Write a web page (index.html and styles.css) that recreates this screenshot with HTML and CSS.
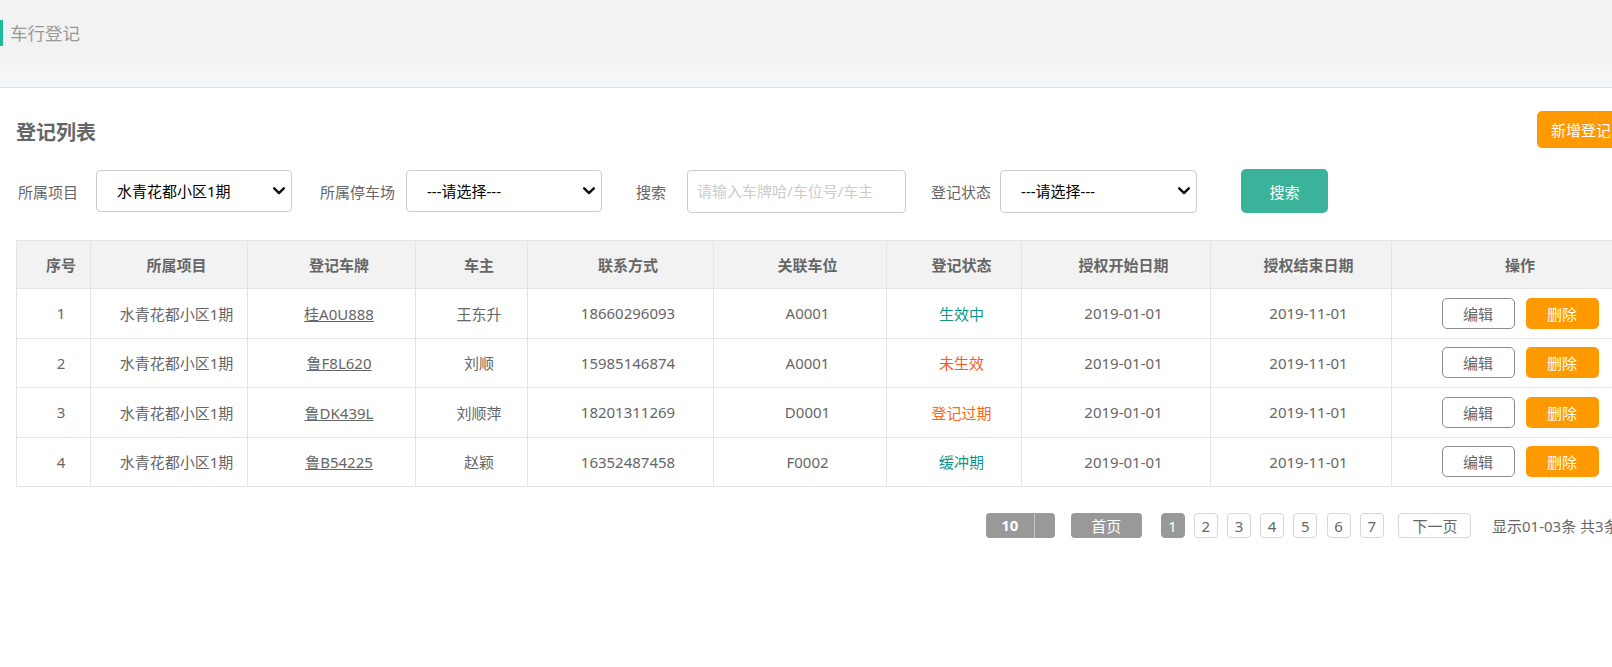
FILE: index.html
```html
<!DOCTYPE html>
<html lang="zh-CN">
<head>
<meta charset="utf-8">
<title>车行登记</title>
<link rel="stylesheet" href="styles.css">
</head>
<body>
<div class="topbar"><span class="crumb">车行登记</span></div>
<div class="strip"></div>
<div class="content">
  <div class="title-row">
    <h2 class="title">登记列表</h2>
    <button class="btn-add">新增登记</button>
  </div>
  <div class="filters">
    <label class="lbl lbl1">所属项目</label>
    <span class="sel-wrap sw1">
      <select class="sel"><option>水青花都小区1期</option></select>
      <svg class="chev" width="12" height="8" viewBox="0 0 12 8"><path d="M1.2 1.3 L6 6.1 L10.8 1.3" fill="none" stroke="#111" stroke-width="2.4" stroke-linecap="round" stroke-linejoin="round"/></svg>
    </span>
    <label class="lbl lbl2">所属停车场</label>
    <span class="sel-wrap sw2">
      <select class="sel"><option>---请选择---</option></select>
      <svg class="chev" width="12" height="8" viewBox="0 0 12 8"><path d="M1.2 1.3 L6 6.1 L10.8 1.3" fill="none" stroke="#111" stroke-width="2.4" stroke-linecap="round" stroke-linejoin="round"/></svg>
    </span>
    <label class="lbl lbl3">搜索</label>
    <input class="search-input" type="text" placeholder="请输入车牌哈/车位号/车主">
    <label class="lbl lbl4">登记状态</label>
    <span class="sel-wrap sw3">
      <select class="sel"><option>---请选择---</option></select>
      <svg class="chev" width="12" height="8" viewBox="0 0 12 8"><path d="M1.2 1.3 L6 6.1 L10.8 1.3" fill="none" stroke="#111" stroke-width="2.4" stroke-linecap="round" stroke-linejoin="round"/></svg>
    </span>
    <button class="btn-search">搜索</button>
  </div>
  <table class="grid">
    <colgroup>
      <col class="c1"><col class="c2"><col class="c3"><col class="c4"><col class="c5">
      <col class="c6"><col class="c7"><col class="c8"><col class="c9"><col class="c10">
    </colgroup>
    <thead>
      <tr>
        <th>序号</th><th>所属项目</th><th>登记车牌</th><th>车主</th><th>联系方式</th>
        <th>关联车位</th><th>登记状态</th><th>授权开始日期</th><th>授权结束日期</th><th>操作</th>
      </tr>
    </thead>
    <tbody>
      <tr>
        <td>1</td><td>水青花都小区1期</td><td><a class="plate">桂A0U888</a></td><td>王东升</td><td>18660296093</td>
        <td>A0001</td><td class="st-ok">生效中</td><td>2019-01-01</td><td>2019-11-01</td>
        <td><span class="ops"><button class="btn-edit">编辑</button><button class="btn-del">删除</button></span></td>
      </tr>
      <tr>
        <td>2</td><td>水青花都小区1期</td><td><a class="plate">鲁F8L620</a></td><td>刘顺</td><td>15985146874</td>
        <td>A0001</td><td class="st-no">未生效</td><td>2019-01-01</td><td>2019-11-01</td>
        <td><span class="ops"><button class="btn-edit">编辑</button><button class="btn-del">删除</button></span></td>
      </tr>
      <tr>
        <td>3</td><td>水青花都小区1期</td><td><a class="plate">鲁DK439L</a></td><td>刘顺萍</td><td>18201311269</td>
        <td>D0001</td><td class="st-exp">登记过期</td><td>2019-01-01</td><td>2019-11-01</td>
        <td><span class="ops"><button class="btn-edit">编辑</button><button class="btn-del">删除</button></span></td>
      </tr>
      <tr>
        <td>4</td><td>水青花都小区1期</td><td><a class="plate">鲁B54225</a></td><td>赵颖</td><td>16352487458</td>
        <td>F0002</td><td class="st-ok">缓冲期</td><td>2019-01-01</td><td>2019-11-01</td>
        <td><span class="ops"><button class="btn-edit">编辑</button><button class="btn-del">删除</button></span></td>
      </tr>
    </tbody>
  </table>
  <div class="pager">
    <span class="size"><span class="num">10</span><span class="drop"></span></span>
    <span class="first">首页</span>
    <span class="page active">1</span>
    <span class="page">2</span>
    <span class="page">3</span>
    <span class="page">4</span>
    <span class="page">5</span>
    <span class="page">6</span>
    <span class="page">7</span>
    <span class="next">下一页</span>
    <span class="info">显示01-03条 共3条</span>
  </div>
</div>
</body>
</html>
```

FILE: styles.css
```css
html, body {
  margin: 0;
  padding: 0;
  overflow: hidden;
}

body {
  font-family: "Noto Sans", "Noto Sans CJK SC", sans-serif;
  font-size: 15px;
  color: #666;
  background: #fff;
}

.topbar {
  height: 65px;
  background: #f2f2f2;
  display: flex;
  align-items: center;
}

.crumb {
  display: block;
  border-left: 3px solid #1bbc9b;
  padding-left: 7px;
  height: 26px;
  line-height: 26px;
  font-size: 17.5px;
  color: #999;
}

.strip {
  height: 22px;
  background: #f5f6f7;
  border-bottom: 1px solid #e0e0e0;
}

.content {
  width: 1617px;
  padding: 23px 0 0 16px;
}

.title-row {
  display: flex;
  justify-content: space-between;
  align-items: center;
  height: 37px;
}

.title {
  margin: 0;
  padding-top: 3px;
  font-size: 20px;
  font-weight: bold;
  color: #666;
}

.btn-add {
  height: 37px;
  padding: 0 14px;
  margin-right: 8px;
  border: none;
  border-radius: 5px;
  background: #ff9900;
  color: #fff;
  font-family: inherit;
  font-size: 15px;
}

.filters {
  display: flex;
  align-items: center;
  height: 44px;
  margin-top: 21px;
}

.lbl {
  color: #666;
  font-size: 15px;
  white-space: nowrap;
}

.lbl1 { margin-left: 2px; }
.lbl2 { margin-left: 28px; }
.lbl3 { margin-left: 34px; }
.lbl4 { margin-left: 25px; }

.sel-wrap {
  position: relative;
  display: block;
  width: 196px;
  height: 42px;
}

.sw1 { margin-left: 18px; }
.sw2 { margin-left: 11px; }
.sw3 { margin-left: 9px; width: 197px; height: 43px; }

.sel {
  -webkit-appearance: none;
  appearance: none;
  box-sizing: border-box;
  display: block;
  width: 100%;
  height: 100%;
  border: 1px solid #ccc;
  border-radius: 4px;
  background: #fff;
  color: #000;
  font-family: inherit;
  font-size: 15px;
  padding: 0 24px 0 20px;
  outline: none;
}

.chev {
  position: absolute;
  right: 7px;
  top: 50%;
  margin-top: -4px;
  pointer-events: none;
}

.search-input {
  box-sizing: border-box;
  width: 219px;
  height: 43px;
  margin-left: 21px;
  border: 1px solid #ccc;
  border-radius: 4px;
  padding: 0 9px;
  font-family: inherit;
  font-size: 15px;
  color: #333;
}

.search-input::placeholder {
  color: #ccc;
}

.btn-search {
  width: 87px;
  height: 44px;
  margin-left: 44px;
  border: none;
  border-radius: 5px;
  background: #3bb39a;
  color: #fff;
  font-family: inherit;
  font-size: 15px;
}

.grid {
  margin-top: 27px;
  border-collapse: collapse;
  table-layout: fixed;
  width: 1617px;
}

.c1 { width: 74px; }
.c2 { width: 157px; }
.c3 { width: 168px; }
.c4 { width: 112px; }
.c5 { width: 186px; }
.c6 { width: 173px; }
.c7 { width: 135px; }
.c8 { width: 189px; }
.c9 { width: 181px; }
.c10 { width: 242px; }

.grid th,
.grid td {
  border: 1px solid #e4e4e4;
  text-align: center;
  padding: 0 0 0 15px;
  white-space: nowrap;
}

.grid th {
  height: 47px;
  background: #f2f2f2;
  font-weight: bold;
  color: #666;
}

.grid td {
  height: 48.5px;
  color: #666;
}

.plate {
  color: #666;
  text-decoration: underline;
}

.st-ok { color: #0f968a !important; }
.st-no { color: #ff5722 !important; }
.st-exp { color: #ff6414 !important; }

.ops {
  display: inline-flex;
  gap: 11px;
  vertical-align: middle;
}

.btn-edit,
.btn-del {
  box-sizing: border-box;
  width: 73px;
  height: 31px;
  border-radius: 5px;
  font-family: inherit;
  font-size: 15px;
  padding: 0;
}

.btn-edit {
  border: 1px solid #8c8c8c;
  background: #fff;
  color: #666;
}

.btn-del {
  border: none;
  background: #ff9900;
  color: #fff;
}

.pager {
  display: flex;
  justify-content: flex-end;
  align-items: center;
  width: 1617px;
  height: 25px;
  margin-top: 26px;
  font-size: 15px;
}

.pager > span {
  box-sizing: border-box;
  height: 25px;
  display: flex;
  align-items: center;
  justify-content: center;
  flex: none;
}

.size {
  width: 69px;
  background: #999;
  border-radius: 4px;
}

.size .num {
  width: 48px;
  height: 25px;
  line-height: 25px;
  text-align: center;
  color: #fff;
  font-weight: bold;
  border-right: 1px solid #c4c4c4;
}

.size .drop {
  flex: 1;
}

.first {
  width: 71px;
  margin-left: 16px;
  background: #999;
  color: #fff;
  border-radius: 4px;
}

.page {
  width: 24px;
  margin-left: 9.2px;
  border: 1px solid #d6d6d6;
  border-radius: 4px;
  color: #666;
}

.page.active {
  margin-left: 18.8px;
  background: #999;
  border-color: #999;
  color: #fff;
}

.next {
  width: 73px;
  margin-left: 14.7px;
  border: 1px solid #d6d6d6;
  border-radius: 4px;
  color: #666;
}

.pager > .info {
  width: 141px;
  margin-left: 20.6px;
  justify-content: flex-start;
  white-space: nowrap;
  color: #666;
}
```
